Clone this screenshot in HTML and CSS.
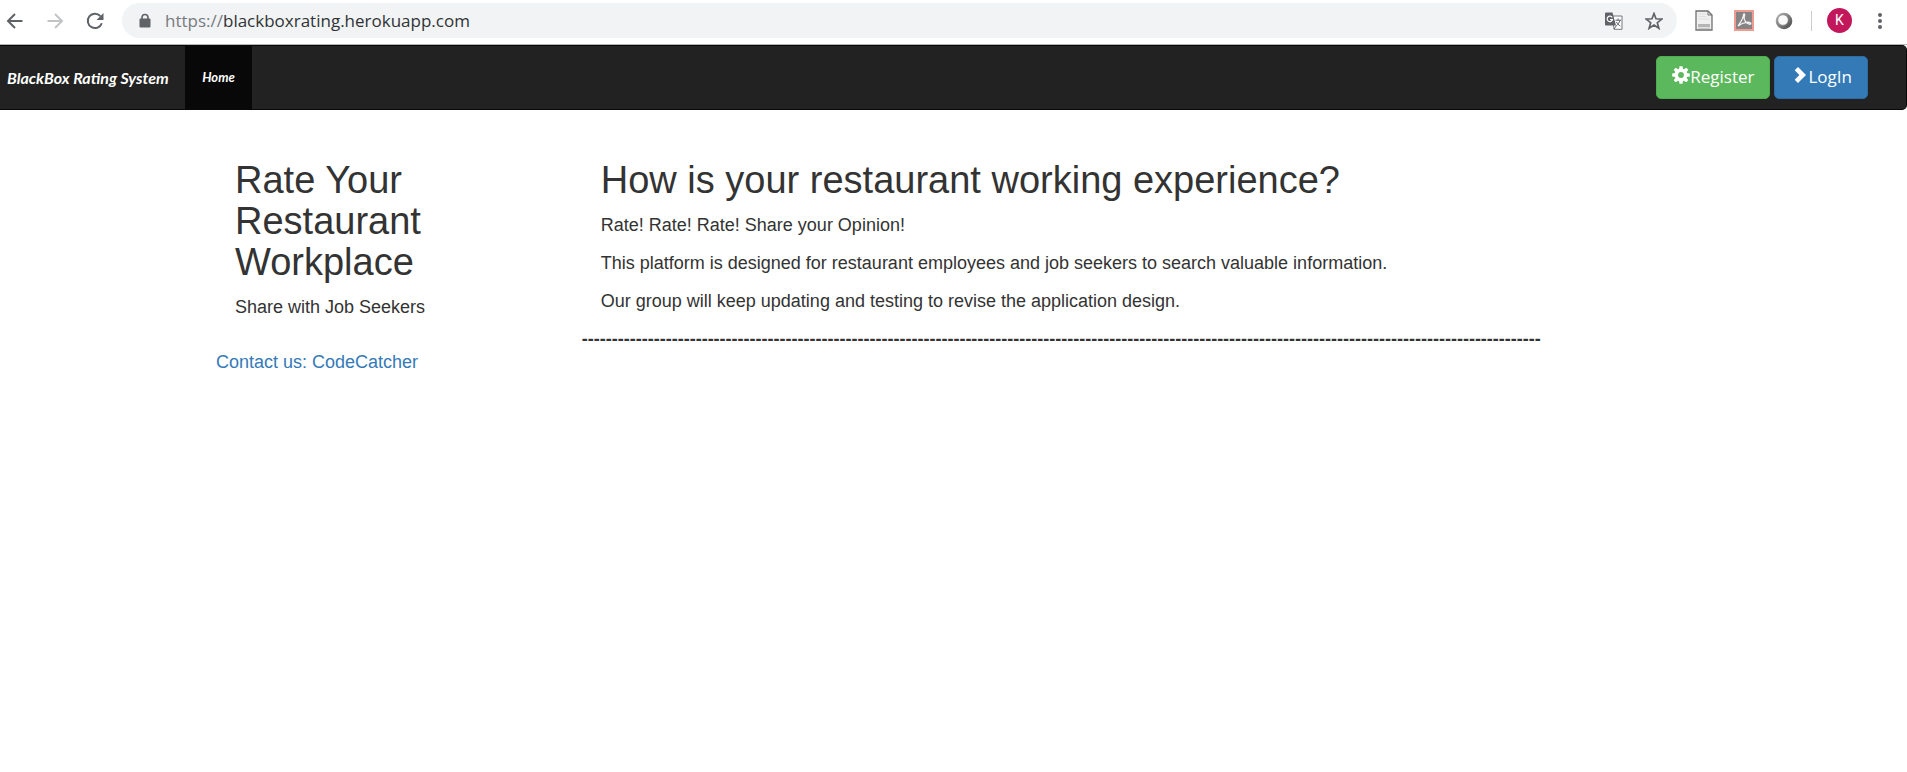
FILE: index.html
```html
<!DOCTYPE html>
<html lang="en">
<head>
<meta charset="utf-8">
<title>BlackBox Rating System</title>
<link rel="stylesheet" href="styles.css">
</head>
<body>
<header class="browser">
  <button class="tool" aria-label="Back"><svg width="18" height="18" viewBox="0 0 18 18"><path d="M16.5 9H2M9 2L2 9l7 7" fill="none" stroke="#5f6368" stroke-width="2"/></svg></button>
  <button class="tool" aria-label="Forward"><svg width="18" height="18" viewBox="0 0 18 18"><path d="M1.500 9H16M9 2l7 7-7 7" fill="none" stroke="#c2c4c6" stroke-width="2"/></svg></button>
  <button class="tool" aria-label="Reload"><svg width="18" height="18" viewBox="0 0 18 18"><path d="M15.800 11.200A7.200 7.200 0 1 1 14.300 4" fill="none" stroke="#5f6368" stroke-width="2"/><path d="M17.500 1v7h-7z" fill="#5f6368"/></svg></button>
  <div class="address">
    <svg width="12" height="16" viewBox="0 0 12 16"><path d="M3 7V4.500a3 3 0 0 1 6 0V7" fill="none" stroke="#5f6368" stroke-width="1.600"/><rect x="0.500" y="5.500" width="11" height="9" rx="1" fill="#5f6368"/></svg>
    <a class="url" href="https://blackboxrating.herokuapp.com"><span class="scheme">https://</span>blackboxrating.herokuapp.com</a>
    <button class="tool" aria-label="Translate"><svg width="18" height="18" viewBox="0 0 18 18"><path d="M7.500 4H17v13.300H9z" fill="#fff" stroke="#74777b"/><path d="M1 .5h6.500L11 13.500H1a1 1 0 0 1-1-1v-11a1 1 0 0 1 1-1z" fill="#5f6368"/><path d="M7.200 5.500A2.700 2.700 0 1 0 7.500 7.500H5" fill="none" stroke="#fff" stroke-width="1.200"/><path d="M10.500 8.200h5.500M13 6.500v1.700M15 8.200c-.5 2.500-2 4-3.500 5.300M11.300 9.800c1 2 2.200 3 4 4.200M9 17l2.500-3.500" fill="none" stroke="#5f6368"/></svg></button>
    <button class="tool" aria-label="Bookmark"><svg width="18" height="18" viewBox="0 0 18 18"><path d="M9 1.500l2 5.300 5.800.3-4.500 3.600 1.600 5.600L9 13.100l-4.900 3.200 1.600-5.600L1.200 7.100l5.800-.3z" fill="none" stroke="#5f6368" stroke-width="1.700"/></svg></button>
  </div>
  <div class="extensions">
    <button class="tool" aria-label="Document"><svg width="18" height="21" viewBox="0 0 18 21"><path d="M1 1h12l4 4v15H1z" fill="#f0f0f0" stroke="#707070" stroke-width="1.300"/><path d="M13 1v4h4" fill="none" stroke="#707070"/><path d="M3.500 4h8M3.500 6.500h8M3.500 9h11" stroke="#e0e0e0"/><path d="M3 14h12v3H3z" fill="#b5b5b5"/><path d="M3 18.200h12" stroke="#bbb"/></svg></button>
    <button class="tool" aria-label="PDF"><svg width="20" height="21" viewBox="0 0 20 21"><path d="M1 1h18v19H1z" fill="#858383" stroke="#ee9c90" stroke-width="2"/><path d="M4 16c2-3 5-6.500 5.500-11 .2-2 2-1 .8 1.500C9 10 13 14 16 14.300c2-.3.500-2.300-3-2-3 .2-6 1.200-9 3.700z" fill="none" stroke="#f2f2f2" stroke-width="1.300"/></svg></button>
    <button class="tool" aria-label="Extension"><svg width="18" height="18" viewBox="0 0 18 18"><defs><linearGradient id="ring" x1="0" y1="0" x2="1" y2="1"><stop offset="0" stop-color="#bbb"/><stop offset="1" stop-color="#444"/></linearGradient></defs><circle cx="9" cy="9" r="8.300" fill="url(#ring)"/><circle cx="8" cy="8" r="5.200" fill="#fafafa" stroke="#888" stroke-width=".6"/></svg></button>
    <span class="divider"></span>
    <button class="avatar" aria-label="Profile">K</button>
    <button class="tool menu" aria-label="Menu"><svg width="6" height="18" viewBox="0 0 6 18"><g fill="#5f6368"><circle cx="3" cy="3" r="2"/><circle cx="3" cy="9" r="2"/><circle cx="3" cy="15" r="2"/></g></svg></button>
  </div>
</header>
<nav class="navbar">
  <a class="brand" href="#">BlackBox Rating System</a>
  <a class="nav-item" href="#">Home</a>
  <div class="actions">
    <button class="btn register"><svg width="18" height="18" viewBox="-9 -9 18 18"><g fill="#fff"><path fill-rule="evenodd" d="M-6.500 0a6.500 6.500 0 1 0 13 0a6.500 6.500 0 1 0-13 0M-2.900 0a2.900 2.900 0 1 1 5.800 0a2.900 2.900 0 1 1-5.800 0"/><path id="tooth" d="M-2.100-5.500L-1.500-8.800h3L2.100-5.500z"/><use href="#tooth" transform="rotate(45)"/><use href="#tooth" transform="rotate(90)"/><use href="#tooth" transform="rotate(135)"/><use href="#tooth" transform="rotate(180)"/><use href="#tooth" transform="rotate(225)"/><use href="#tooth" transform="rotate(270)"/><use href="#tooth" transform="rotate(315)"/></g></svg>Register</button>
    <button class="btn login"><svg width="18" height="18" viewBox="0 0 18 18"><path d="M8 1l8 8-8 8-3.300-3.300L9.400 9 4.700 4.300z" fill="#fff"/></svg>LogIn</button>
  </div>
</nav>
<main class="page">
  <div class="container">
    <aside>
      <div class="panel">
        <h2>Rate Your Restaurant Workplace</h2>
        <p>Share with Job Seekers</p>
      </div>
      <a class="contact" href="#">Contact us: CodeCatcher</a>
    </aside>
    <section>
      <div class="panel">
        <h2>How is your restaurant working experience?</h2>
        <p>Rate! Rate! Rate! Share your Opinion!</p>
        <p>This platform is designed for restaurant employees and job seekers to search valuable information.</p>
        <p>Our group will keep updating and testing to revise the application design.</p>
      </div>
      <div class="rule">----------------------------------------------------------------------------------------------------------------------------------------------------------------</div>
    </section>
  </div>
</main>
</body>
</html>
```
FILE: styles.css
```css
* { box-sizing: border-box; }
body {
  margin: 0;
  background: #fff;
  color: #333;
  font: 18px/25px "Liberation Sans", Arial, sans-serif;
}
button { border: 0; padding: 0; background: none; font: inherit; cursor: pointer; }
a { text-decoration: none; }
svg { display: block; }
.browser {
  display: flex;
  align-items: center;
  gap: 22px;
  height: 45px;
  padding: 0 24px 3px 6px;
  border-bottom: 1px solid #b4b4b4;
}
.tool { flex: none; }
.address {
  flex: 1;
  display: flex;
  align-items: center;
  gap: 22px;
  height: 35px;
  margin-left: -4px;
  padding: 0 14px 0 17px;
  border-radius: 18px;
  background: #f1f3f4;
}
.url {
  flex: 1;
  margin-left: -8px;
  color: #303336;
  font: 17px/24px "Open Sans", "Noto Sans", sans-serif;
}
.scheme { color: #777b7f; }
.extensions { display: flex; align-items: center; gap: 21px; margin-left: -4px; }
.divider { width: 1px; height: 20px; margin: 0 -6px 0 -3px; background: #ccc; }
.avatar {
  width: 25px;
  height: 25px;
  border-radius: 50%;
  background: #c2185b;
  color: #fff;
  font: 14px/25px Roboto, sans-serif;
}
.menu { margin-left: 4px; }
.navbar {
  display: flex;
  align-items: stretch;
  min-height: 65px;
  border: 1px solid #080808;
  border-left: 0;
  border-radius: 0 5px 5px 0;
  background: #222;
}
.brand, .nav-item {
  display: flex;
  align-items: center;
  color: #fff;
  font-family: Lato, "Liberation Sans", sans-serif;
  font-style: italic;
  font-weight: bold;
}
.brand { width: 185px; padding-left: 7px; font-size: 16px; white-space: nowrap; }
.nav-item { justify-content: center; width: 67px; background: #080808; font-size: 13px; }
.actions { display: flex; align-items: center; gap: 4px; margin-left: auto; padding-right: 38px; }
.btn {
  display: flex;
  align-items: center;
  height: 43px;
  padding: 0 15px 2px;
  border: 1px solid;
  border-radius: 5px;
  color: #fff;
  font: 17px/25px "Open Sans", "Noto Sans", sans-serif;
}
.btn svg { margin-bottom: 4px; }
.register { background: #5cb85c; border-color: #4cae4c; }
.login { background: #337ab7; border-color: #2e6da4; }
.page { padding: 50px 12px 0 0; }
.container { display: grid; grid-template-columns: 1fr 3fr; max-width: 1463px; margin: 0 auto; }
.panel { padding: 0 19px; }
h2 { margin: 0 0 12px; font-size: 38px; line-height: 41px; font-weight: normal; }
p { margin: 0 0 13px; }
.contact { display: block; margin-top: 30px; color: #337ab7; }
.rule { font-weight: bold; white-space: nowrap; }
```
